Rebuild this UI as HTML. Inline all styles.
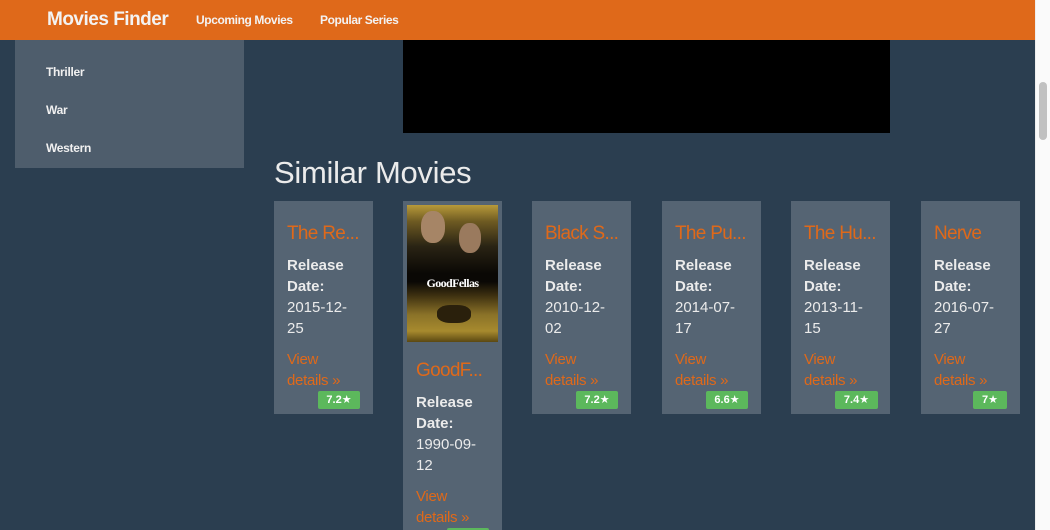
<!DOCTYPE html>
<html style="width:1050px;height:530px;overflow:hidden"><head><meta charset="utf-8"><style>
*{margin:0;padding:0;box-sizing:border-box}
body{width:1050px;height:530px;overflow:hidden;background:#2B3E50;font-family:"Liberation Sans","DejaVu Sans",sans-serif;position:relative;color:#EBEBEB}
.nav{position:absolute;left:0;top:0;width:1035px;height:40px;background:#DF691A}
.brand{position:absolute;left:47px;top:9px;font-size:19px;font-weight:bold;color:#f3f3f3;letter-spacing:-0.5px}
.nl{position:absolute;top:13px;font-size:12px;font-weight:bold;color:#f3f3f3;letter-spacing:-0.4px}
.side{position:absolute;left:15px;top:40px;width:229px;height:128px;background:#4E5D6C}
.si{position:absolute;left:31px;font-size:12px;font-weight:bold;color:#f0f0f0;letter-spacing:-0.3px}
.video{position:absolute;left:403px;top:40px;width:487px;height:93px;background:#000}
h2{position:absolute;left:274px;top:155px;font-size:31px;font-weight:normal;color:#EBEBEB;letter-spacing:-0.3px}
.card{position:absolute;top:201px;width:99px;height:213px;background:#556473;overflow:hidden}
.t{position:absolute;left:13px;font-size:19px;color:#DF691A;white-space:nowrap;letter-spacing:-0.7px}
.c{position:absolute;left:13px;font-size:15px;line-height:21px;color:#EBEBEB}
.c b{font-weight:bold}
.v{position:absolute;left:13px;font-size:15px;line-height:21px;color:#DF691A;letter-spacing:-0.3px}
.bd{position:absolute;height:18px;background:#5CB85C;color:#fff;font-size:11px;font-weight:bold;text-align:center;line-height:18px;border-radius:2px}
.sb{position:absolute;left:1035px;top:0;width:15px;height:530px;background:#fafafa;border-left:1px solid #eee}
.th{position:absolute;left:1039px;top:82px;width:8px;height:58px;border-radius:4px;background:#c1c1c1}
</style></head><body>
<div class="nav">
<div class="brand">Movies Finder</div>
<div class="nl" style="left:196px">Upcoming Movies</div>
<div class="nl" style="left:320px">Popular Series</div>
</div>
<div class="side">
<div class="si" style="top:25px">Thriller</div>
<div class="si" style="top:63px">War</div>
<div class="si" style="top:101px">Western</div>
</div>
<div class="video"></div>
<h2>Similar Movies</h2>

<div class="card" style="left:274px"><div class="t" style="top:22px">The Re...</div>
<div class="c" style="top:54px"><b>Release<br>Date:</b><br>2015-12-<br>25</div>
<div class="v" style="top:148px">View<br>details »</div>
<div class="bd" style="left:44px;top:190px;width:42px">7.2★</div></div>

<div class="card" style="left:403px;height:329px">
<div style="position:absolute;left:4px;top:4px;width:91px;height:137px;background:linear-gradient(180deg,#b89a3a 0%,#6e5a22 12%,#2a2414 30%,#0a0805 50%,#0a0805 56%,#3d3010 66%,#8a7228 80%,#a78a2e 92%,#5a4812 100%)">
<div style="position:absolute;left:14px;top:6px;width:24px;height:32px;border-radius:45%;background:#a68566"></div>
<div style="position:absolute;left:52px;top:18px;width:22px;height:30px;border-radius:45%;background:#9a7a5e"></div>
<div style="position:absolute;left:0;top:71px;width:91px;text-align:center;font-family:'Liberation Serif',serif;font-weight:bold;font-size:12px;color:#fff;letter-spacing:-0.6px">GoodFellas</div>
<div style="position:absolute;left:30px;top:100px;width:34px;height:18px;border-radius:40%;background:#2a200c"></div>
</div>
<div class="t" style="top:159px">GoodF...</div>
<div class="c" style="top:191px"><b>Release<br>Date:</b><br>1990-09-<br>12</div>
<div class="v" style="top:285px">View<br>details »</div>
<div class="bd" style="left:44px;top:327px;width:42px">6.8★</div></div>

<div class="card" style="left:532px"><div class="t" style="top:22px">Black S...</div>
<div class="c" style="top:54px"><b>Release<br>Date:</b><br>2010-12-<br>02</div>
<div class="v" style="top:148px">View<br>details »</div>
<div class="bd" style="left:44px;top:190px;width:42px">7.2★</div></div>

<div class="card" style="left:662px"><div class="t" style="top:22px">The Pu...</div>
<div class="c" style="top:54px"><b>Release<br>Date:</b><br>2014-07-<br>17</div>
<div class="v" style="top:148px">View<br>details »</div>
<div class="bd" style="left:44px;top:190px;width:42px">6.6★</div></div>

<div class="card" style="left:791px"><div class="t" style="top:22px">The Hu...</div>
<div class="c" style="top:54px"><b>Release<br>Date:</b><br>2013-11-<br>15</div>
<div class="v" style="top:148px">View<br>details »</div>
<div class="bd" style="left:44px;top:190px;width:43px">7.4★</div></div>

<div class="card" style="left:921px"><div class="t" style="top:22px">Nerve</div>
<div class="c" style="top:54px"><b>Release<br>Date:</b><br>2016-07-<br>27</div>
<div class="v" style="top:148px">View<br>details »</div>
<div class="bd" style="left:52px;top:190px;width:34px">7★</div></div>

<div class="sb"></div><div class="th"></div>
</body></html>
